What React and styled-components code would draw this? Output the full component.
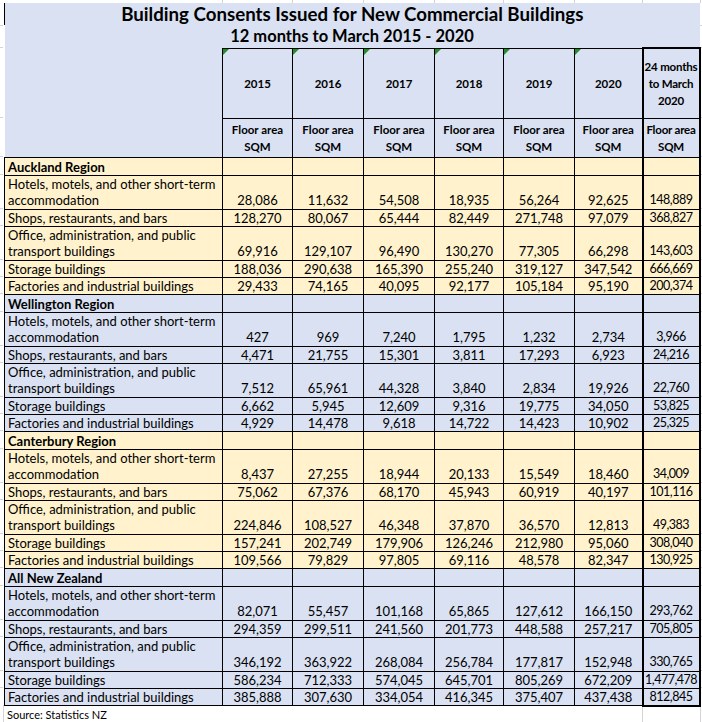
import React from 'react';
import styled, { createGlobalStyle, css } from 'styled-components';

const BLUE = '#d9e1f2';
const YELLOW = '#fff2cc';
const GRID = '#d4d4d4';

const COLS = [218, 70, 71, 71, 69, 71, 68, 57];
const YEARS = ['2015', '2016', '2017', '2018', '2019', '2020'];

const ROWS = [
  { label: ['Hotels, motels, and other short-term', 'accommodation'], h: 34 },
  { label: ['Shops, restaurants, and bars'], h: 17 },
  { label: ['Office, administration, and public', 'transport buildings'], h: 34 },
  { label: ['Storage buildings'], h: 17 },
  { label: ['Factories and industrial buildings'], h: 17 },
];

const REGIONS = [
  {
    name: 'Auckland Region',
    tone: 'yellow',
    values: [
      ['28,086', '11,632', '54,508', '18,935', '56,264', '92,625', '148,889'],
      ['128,270', '80,067', '65,444', '82,449', '271,748', '97,079', '368,827'],
      ['69,916', '129,107', '96,490', '130,270', '77,305', '66,298', '143,603'],
      ['188,036', '290,638', '165,390', '255,240', '319,127', '347,542', '666,669'],
      ['29,433', '74,165', '40,095', '92,177', '105,184', '95,190', '200,374'],
    ],
  },
  {
    name: 'Wellington Region',
    tone: 'blue',
    values: [
      ['427', '969', '7,240', '1,795', '1,232', '2,734', '3,966'],
      ['4,471', '21,755', '15,301', '3,811', '17,293', '6,923', '24,216'],
      ['7,512', '65,961', '44,328', '3,840', '2,834', '19,926', '22,760'],
      ['6,662', '5,945', '12,609', '9,316', '19,775', '34,050', '53,825'],
      ['4,929', '14,478', '9,618', '14,722', '14,423', '10,902', '25,325'],
    ],
  },
  {
    name: 'Canterbury Region',
    tone: 'yellow',
    values: [
      ['8,437', '27,255', '18,944', '20,133', '15,549', '18,460', '34,009'],
      ['75,062', '67,376', '68,170', '45,943', '60,919', '40,197', '101,116'],
      ['224,846', '108,527', '46,348', '37,870', '36,570', '12,813', '49,383'],
      ['157,241', '202,749', '179,906', '126,246', '212,980', '95,060', '308,040'],
      ['109,566', '79,829', '97,805', '69,116', '48,578', '82,347', '130,925'],
    ],
  },
  {
    name: 'All New Zealand',
    tone: 'blue',
    values: [
      ['82,071', '55,457', '101,168', '65,865', '127,612', '166,150', '293,762'],
      ['294,359', '299,511', '241,560', '201,773', '448,588', '257,217', '705,805'],
      ['346,192', '363,922', '268,084', '256,784', '177,817', '152,948', '330,765'],
      ['586,234', '712,333', '574,045', '645,701', '805,269', '672,209', '1,477,478'],
      ['385,888', '307,630', '334,054', '416,345', '375,407', '437,438', '812,845'],
    ],
  },
];

// faint spreadsheet gridlines showing round the edges of the table
const line = (x, y, w, h) =>
  `linear-gradient(${GRID}, ${GRID}) ${x}px ${y}px / ${w}px ${h}px no-repeat`;
const topTicks = [222, 292, 363, 434, 503, 574, 642, 700].map((x) => line(x, 0, 1, 3));
const sideTicks = [25, 47, 117, 156, 174, 208, 225, 259, 276, 293, 311, 345, 362, 396, 413, 430, 448, 482, 499, 533, 550, 567, 585, 619, 636, 670, 687]
  .flatMap((y) => [line(0, y, 3, 1), line(700, y, 2, 1)]);
const bottomTicks = [3, 642, 700].map((x) => line(x, 705, 1, 17));
const gridBackground = [...topTicks, ...sideTicks, ...bottomTicks].join(', ');

const GlobalStyle = createGlobalStyle`
  body {
    margin: 0;
    background: #fff;
    color: #000;
    font-family: Lato, "Open Sans", sans-serif;
  }
`;

const Sheet = styled.div`
  width: 702px;
  height: 722px;
  box-sizing: border-box;
  padding: 3px 3px 0 4px;
  background: ${gridBackground};
`;

const Table = styled.table`
  width: 695px;
  table-layout: fixed;
  border-collapse: collapse;
  border-spacing: 0;
`;

const TitleCell = styled.td`
  height: ${({ $h }) => $h}px;
  padding: 0;
  background: ${BLUE};
  text-align: center;
  font-weight: 700;
  font-size: ${({ $size }) => $size}px;
  line-height: 20px;
  white-space: nowrap;
  ${({ $edge }) => $edge && css`border-left: 1px solid #000;`}
`;

const Blank = styled.td`
  padding: 0;
  background: ${BLUE};
  ${({ $bottom }) => $bottom && css`border-bottom: 1px solid #000;`}
`;

const thickCol = css`
  border-left: 2px solid #000;
  border-right: 2px solid #000;
`;

const HeadCell = styled.td`
  position: relative;
  padding: 0;
  background: ${BLUE};
  border: 1px solid #000;
  text-align: center;
  vertical-align: middle;
  white-space: nowrap;
  font-size: 11.5px;
  font-weight: 700;
  line-height: 17px;
  ${({ $thick }) =>
    $thick &&
    css`
      ${thickCol}
      letter-spacing: -0.2px;
    `}
  ${({ $top }) => $top && css`border-top: 2px solid #000;`}
  ${({ $flag }) =>
    $flag &&
    css`
      &::before {
        content: '';
        position: absolute;
        top: 0;
        left: 0;
        border-top: 6px solid #1f8f28;
        border-right: 6px solid transparent;
      }
    `}
`;

const tone = ({ $tone }) => ($tone === 'yellow' ? YELLOW : BLUE);

const DataRow = styled.tr`
  height: ${({ $h }) => $h}px;
  line-height: ${({ $h }) => ($h > 30 ? 16.5 : 16)}px;
`;

const LabelCell = styled.td`
  padding: 0 3px;
  background: ${tone};
  border: 1px solid #000;
  vertical-align: bottom;
  white-space: nowrap;
  font-size: 13px;
  font-weight: ${({ $region }) => ($region ? 700 : 400)};
`;

const NumCell = styled.td`
  padding: 0;
  background: ${tone};
  border: 1px solid #000;
  text-align: center;
  vertical-align: bottom;
  white-space: nowrap;
  font-size: 13px;
  ${({ $thick }) =>
    $thick &&
    css`
      ${thickCol}
      font-size: 12.5px;
      letter-spacing: -0.5px;
    `}
  ${({ $end }) => $end && css`border-bottom: 2px solid #000;`}
`;

const Source = styled.div`
  padding-left: 3px;
  font-size: 11px;
  line-height: 15px;
`;

const Label = ({ lines }) =>
  lines.map((t, i) => (
    <React.Fragment key={t}>
      {i > 0 && <br />}
      {t}
    </React.Fragment>
  ));

const App = () => (
  <>
    <GlobalStyle />
    <Sheet>
      <Table>
        <colgroup>
          {COLS.map((w, i) => (
            <col key={i} style={{ width: w }} />
          ))}
        </colgroup>
        <tbody>
          <tr>
            <TitleCell colSpan={8} $h={22} $size={18.7} $edge>
              Building Consents Issued for New Commercial Buildings
            </TitleCell>
          </tr>
          <tr>
            <TitleCell colSpan={8} $h={22} $size={16.5}>
              12 months to March 2015 - 2020
            </TitleCell>
          </tr>
          <tr style={{ height: 70 }}>
            <Blank />
            {YEARS.map((y) => (
              <HeadCell key={y} $flag>
                {y}
              </HeadCell>
            ))}
            <HeadCell $thick $top>
              24 months
              <br />
              to March
              <br />
              2020
            </HeadCell>
          </tr>
          <tr style={{ height: 39 }}>
            <Blank $bottom />
            {COLS.slice(1).map((_, i) => (
              <HeadCell key={i} $thick={i === 6}>
                Floor area
                <br />
                SQM
              </HeadCell>
            ))}
          </tr>
          {REGIONS.map((region, r) => (
            <React.Fragment key={region.name}>
              <DataRow $h={18}>
                <LabelCell $tone={region.tone} $region>
                  {region.name}
                </LabelCell>
                {COLS.slice(1).map((_, i) => (
                  <NumCell key={i} $tone={region.tone} $thick={i === 6} />
                ))}
              </DataRow>
              {ROWS.map((row, k) => (
                <DataRow key={k} $h={row.h}>
                  <LabelCell $tone={region.tone}>
                    <Label lines={row.label} />
                  </LabelCell>
                  {region.values[k].map((v, i) => (
                    <NumCell
                      key={i}
                      $tone={region.tone}
                      $thick={i === 6}
                      $end={i === 6 && r === REGIONS.length - 1 && k === ROWS.length - 1}
                    >
                      {v}
                    </NumCell>
                  ))}
                </DataRow>
              ))}
            </React.Fragment>
          ))}
        </tbody>
      </Table>
      <Source>Source: Statistics NZ</Source>
    </Sheet>
  </>
);

export default App;
